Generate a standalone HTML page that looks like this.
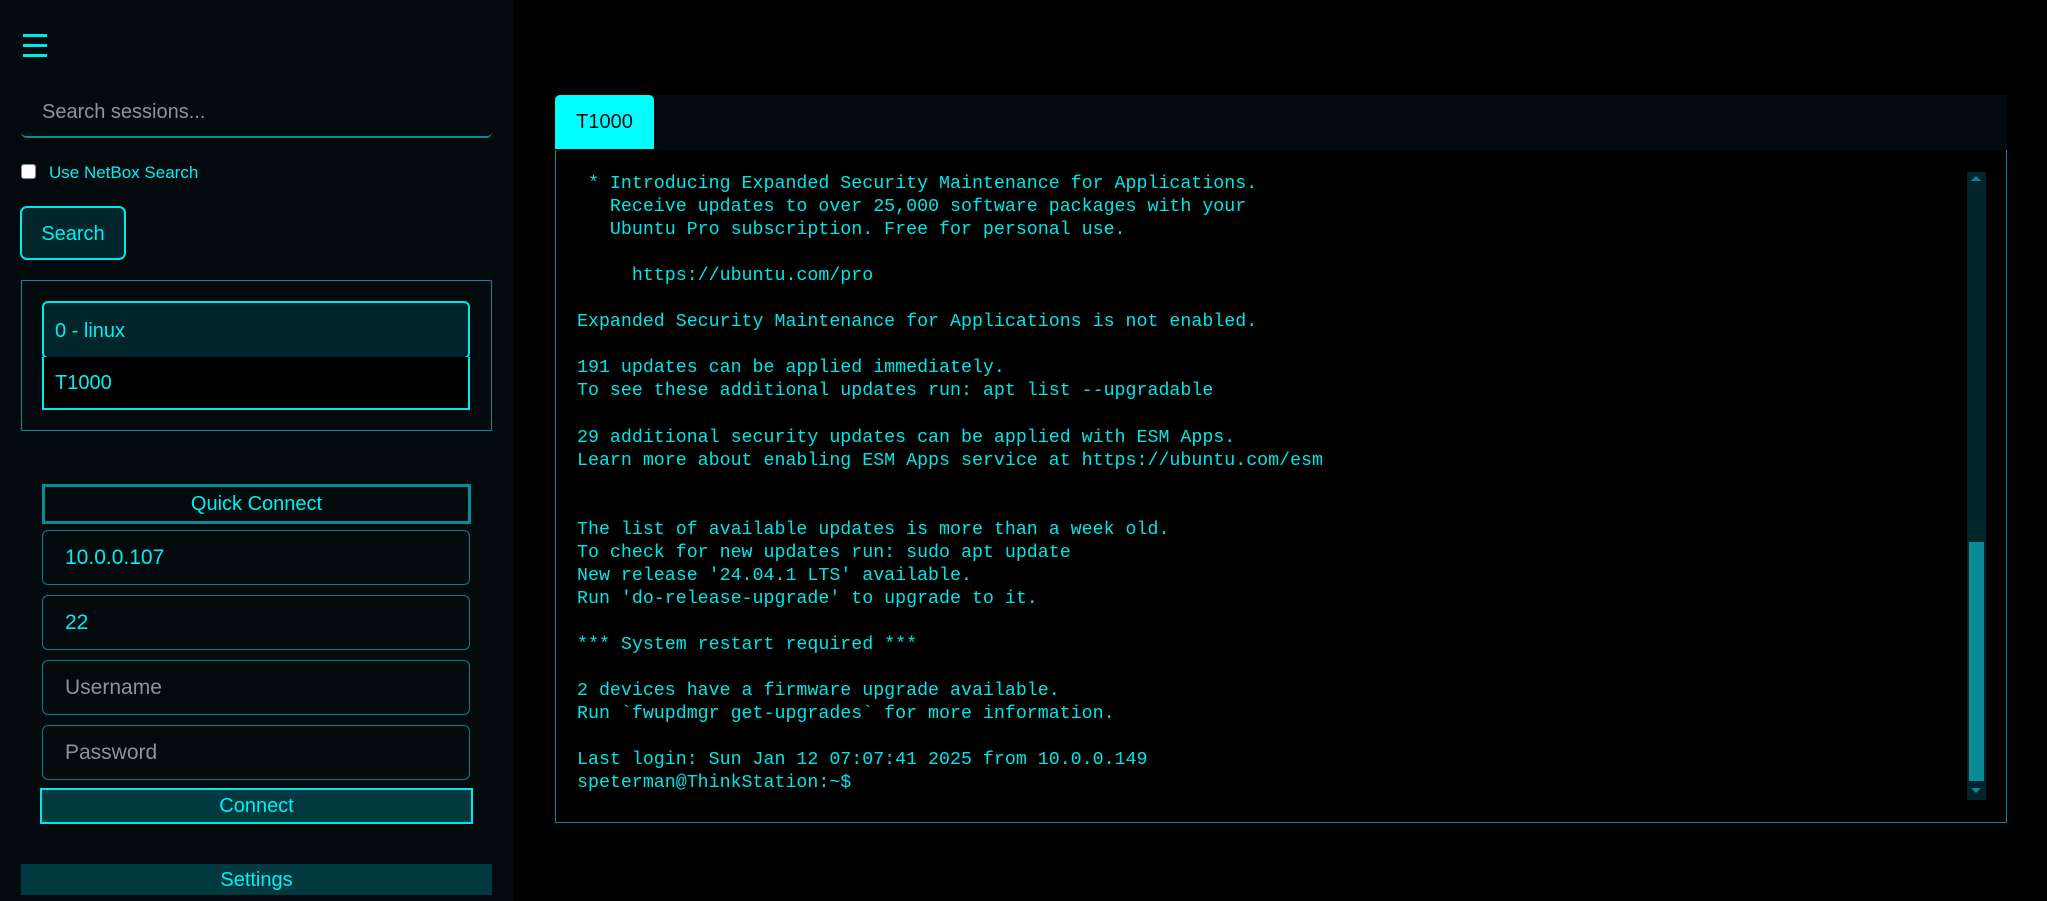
<!DOCTYPE html>
<html><head><meta charset="utf-8"><style>
*{box-sizing:border-box;margin:0;padding:0}
body{width:2047px;height:901px;background:#000;overflow:hidden;position:relative;font-family:"Liberation Sans","DejaVu Sans",sans-serif;color:#00f0f0}
.abs{position:absolute}
#side{left:0;top:0;width:513px;height:901px;background:#020a0e}
.ham{left:23px;width:24px;height:3px;background:#00e8e8}
.inp{left:42px;width:428px;height:55px;border:1px solid #0a7f88;border-radius:6px;background:#020a0e;font-size:21px;padding-left:22px;line-height:53px}
.ph{color:#8a9499}
.ctr{text-align:center}
pre{font-family:"Liberation Mono",monospace;font-size:18.3px;line-height:23.04px;color:#00e6e6}
</style></head><body>
<div id="side" class="abs"></div>
<div class="abs ham" style="top:34px"></div>
<div class="abs ham" style="top:44px"></div>
<div class="abs ham" style="top:54px"></div>
<div class="abs" style="left:21px;top:84px;width:471px;height:54px;border-bottom:2px solid #0a8a94;border-radius:6px;font-size:20px;line-height:56px;padding-left:21px;color:#8a9499">Search sessions...</div>
<div class="abs" style="left:21px;top:164px;width:15px;height:15px;background:#fff;border:1px solid #888;border-radius:3px"></div>
<div class="abs" style="left:49px;top:163px;font-size:17px;line-height:20px">Use NetBox Search</div>
<div class="abs ctr" style="left:20px;top:206px;width:106px;height:54px;border:2px solid #00e8e8;border-radius:7px;background:#00252a;font-size:20px;line-height:52px">Search</div>
<div class="abs" style="left:21px;top:280px;width:471px;height:151px;border:1px solid #0a8a94"></div>
<div class="abs" style="left:42px;top:301px;width:428px;height:58px;border:2px solid #00e8e8;border-radius:6px;background:#00252a;font-size:20px;line-height:56px;padding-left:11px">0 - linux</div>
<div class="abs" style="left:42px;top:357px;width:428px;height:53px;border:2px solid #00e8e8;border-top:none;background:#000;font-size:20px;line-height:52px;padding-left:11px">T1000</div>
<div class="abs ctr" style="left:42px;top:484px;width:429px;height:40px;border:3px solid #0a8a94;font-size:20px;line-height:35px">Quick Connect</div>
<div class="abs inp" style="top:530px">10.0.0.107</div>
<div class="abs inp" style="top:595px">22</div>
<div class="abs inp ph" style="top:660px">Username</div>
<div class="abs inp ph" style="top:725px">Password</div>
<div class="abs ctr" style="left:40px;top:788px;width:433px;height:36px;border:2px solid #00e8e8;background:#003a40;font-size:20px;line-height:33px">Connect</div>
<div class="abs ctr" style="left:21px;top:864px;width:471px;height:31px;background:#003a40;font-size:20px;line-height:33px">Settings</div>

<div class="abs" style="left:555px;top:95px;width:1452px;height:56px;background:#030b0e;border-bottom:1px solid #0a8a94"></div>
<div class="abs ctr" style="left:555px;top:95px;width:99px;height:54px;background:#00ffff;border-radius:5px 5px 0 0;color:#041010;font-size:20px;line-height:54px">T1000</div>
<div class="abs" style="left:555px;top:150px;width:1452px;height:673px;border:1px solid #0a8a94;border-top:none;background:#000"></div>
<div class="abs" style="left:1967px;top:172px;width:19px;height:628px;background:#00252a"></div>
<div class="abs" style="left:1969px;top:542px;width:15px;height:239px;background:#0a8a94"></div>
<div class="abs" style="left:1971px;top:176px;width:0;height:0;border-left:5px solid transparent;border-right:5px solid transparent;border-bottom:5px solid #0a8a94"></div>
<div class="abs" style="left:1971px;top:788px;width:0;height:0;border-left:5px solid transparent;border-right:5px solid transparent;border-top:5px solid #0a8a94"></div>
<pre class="abs" style="left:577px;top:173px"> * Introducing Expanded Security Maintenance for Applications.
   Receive updates to over 25,000 software packages with your
   Ubuntu Pro subscription. Free for personal use.

     https://ubuntu.com/pro

Expanded Security Maintenance for Applications is not enabled.

191 updates can be applied immediately.
To see these additional updates run: apt list --upgradable

29 additional security updates can be applied with ESM Apps.
Learn more about enabling ESM Apps service at https://ubuntu.com/esm


The list of available updates is more than a week old.
To check for new updates run: sudo apt update
New release '24.04.1 LTS' available.
Run 'do-release-upgrade' to upgrade to it.

*** System restart required ***

2 devices have a firmware upgrade available.
Run `fwupdmgr get-upgrades` for more information.

Last login: Sun Jan 12 07:07:41 2025 from 10.0.0.149
speterman@ThinkStation:~$</pre>
</body></html>
